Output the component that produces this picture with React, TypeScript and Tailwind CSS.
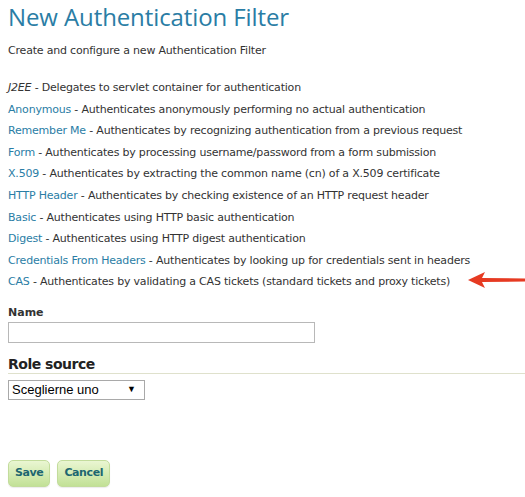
import React from "react";

const filters: { name: string; desc: string; plain?: boolean }[] = [
  { name: "J2EE", desc: "Delegates to servlet container for authentication", plain: true },
  { name: "Anonymous", desc: "Authenticates anonymously performing no actual authentication" },
  { name: "Remember Me", desc: "Authenticates by recognizing authentication from a previous request" },
  { name: "Form", desc: "Authenticates by processing username/password from a form submission" },
  { name: "X.509", desc: "Authenticates by extracting the common name (cn) of a X.509 certificate" },
  { name: "HTTP Header", desc: "Authenticates by checking existence of an HTTP request header" },
  { name: "Basic", desc: "Authenticates using HTTP basic authentication" },
  { name: "Digest", desc: "Authenticates using HTTP digest authentication" },
  { name: "Credentials From Headers", desc: "Authenticates by looking up for credentials sent in headers" },
  { name: "CAS", desc: "Authenticates by validating a CAS tickets (standard tickets and proxy tickets)" },
];

function Arrow() {
  return (
    <svg width="62" height="18" viewBox="0 0 62 18" className="absolute left-[458px] top-[-3px]">
      <path d="M2 9 L19 1 L16 7 L60 7.5 L60 10.5 L16 11 L19 17 Z" fill="#e63a22" />
    </svg>
  );
}

const btn =
  "h-[27px] rounded-[5px] border border-[#c3dc9c] bg-gradient-to-b from-[#eaf6d2] to-[#c2e196] px-[6px] text-[11px] font-bold tracking-[-0.4px] text-[#1d6670] shadow-[0_1px_1px_rgba(0,0,0,0.08)]";

export default function App() {
  return (
    <div className="w-[525px] h-[497px] bg-white px-2 text-[#333] overflow-hidden" style={{ fontFamily: "Tahoma, 'DejaVu Sans', sans-serif" }}>
      <h1 className="pt-[2px] text-[24px] leading-[30px] tracking-[-0.1px] text-[#2a7da5]" style={{ fontFamily: "'Open Sans', 'Liberation Sans', sans-serif" }}>
        New Authentication Filter
      </h1>
      <p className="mt-[11px] text-[11px] leading-[16px] tracking-[-0.2px]">Create and configure a new Authentication Filter</p>
      <ul className="mt-[21px] flex flex-col text-[11px] leading-[16px] tracking-[-0.2px]">
        {filters.map((f, i) => (
          <li key={f.name} className="relative h-[21.6px]">
            {f.plain ? <i>{f.name}</i> : <span className="text-[#2a7da5]">{f.name}</span>} - {f.desc}
            {i === filters.length - 1 && <Arrow />}
          </li>
        ))}
      </ul>
      <label className="mt-[10px] block text-[11px] font-bold leading-[14px]">Name</label>
      <input className="mt-[2px] block h-[21px] w-[307px] border border-[#b8b8b8] bg-white" />
      <h2 className="mt-[12px] -mr-2 border-b border-[#dfe1cc] pb-0 text-[14px] font-bold leading-[18px] tracking-[-0.5px] text-[#222]">Role source</h2>
      <div className="mt-[6px] flex h-[20px] w-[137px] items-center justify-between border border-[#a9a9a9] px-[3px] text-[13px] text-black" style={{ fontFamily: "'Liberation Sans', Arial, sans-serif" }}>
        <span>Sceglierne uno</span>
        <span className="pr-[5px] text-[9px]">▼</span>
      </div>
      <div className="mt-[60px] flex gap-[7px]">
        <button className={btn}>Save</button>
        <button className={btn}>Cancel</button>
      </div>
    </div>
  );
}
